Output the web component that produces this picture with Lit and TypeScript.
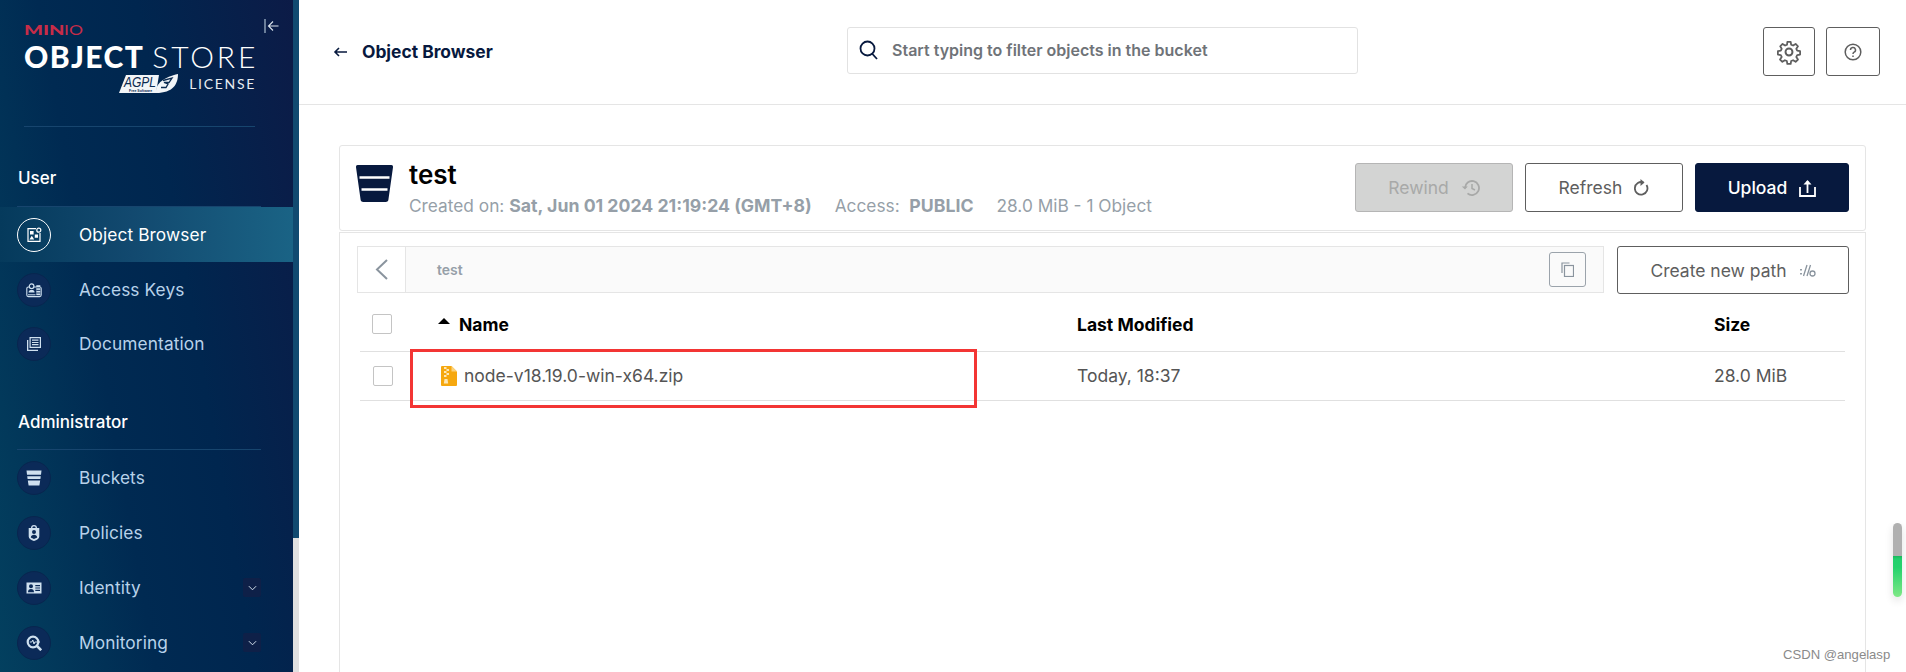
import { LitElement, html, css, svg } from "lit";
import { customElement } from "lit/decorators.js";

const icons: Record<string, unknown> = {
  object: svg`<svg viewBox="0 0 16 16" width="16" height="16"><path fill="none" stroke="currentColor" stroke-width="1.200" d="M10 1.600H2v12.800h12V6"/><circle cx="12.800" cy="3.200" r="2" fill="none" stroke="currentColor" stroke-width="1.200"/><path fill="currentColor" d="M4 4h3.600v3.600H4zM8.800 7.600h3.200v3.200H8.800zM5.800 8.800l2.400 3.800H3.400z"/></svg>`,
  keys: svg`<svg viewBox="0 0 16 16" width="16" height="16"><rect x=".8" y="5" width="14.400" height="9.600" rx="1.600" fill="none" stroke="currentColor" stroke-width="1.100"/><circle cx="5.600" cy="4.200" r="2.300" fill="#0b2a58" stroke="currentColor" stroke-width="1.200"/><path d="M2.600 10.500c0-1.700 1.300-2.700 3-2.700s3 1 3 2.700z" fill="currentColor"/><path d="M2 12.300h7.500v1H2z" fill="currentColor"/><path d="M10.300 3.200h4v10h-4z" fill="currentColor"/><path d="M10.300 5.800h4M10.300 8.400h4M10.300 11h4" stroke="#0b2a58" stroke-width=".9"/></svg>`,
  docs: svg`<svg viewBox="0 0 16 16" width="16" height="16" fill="currentColor"><path fill-rule="evenodd" d="M3.500 1H15v11H3.500zM4.700 2.200v8.600h9.100V2.200zM6 3.600h6.500v1.100H6zM6 5.900h6.500V7H6zM6 8.100h6.500v1.100H6z"/><path d="M1 4h1.300v9.700H12V15H1z"/></svg>`,
  bucket: svg`<svg viewBox="0 0 16 16" width="16" height="16" fill="currentColor"><path d="M.5 .5h15l-.5 4.300H1zM1.200 6.300h13.600l-.4 2.800H1.600zM1.800 10.500h12.400l-.8 5H2.600z"/></svg>`,
  policy: svg`<svg viewBox="0 0 16 16" width="16" height="16" fill="currentColor"><path fill-rule="evenodd" d="M8 0a3 3 0 0 1 3 3h2.300v8.500c0 2-2.500 3.500-5.300 4.500-2.800-1-5.300-2.500-5.300-4.500V3H5a3 3 0 0 1 3-3zM8 1.300A1.700 1.700 0 0 0 6.300 3h3.400A1.700 1.700 0 0 0 8 1.300zM8 5a2 2 0 1 0 0 4 2 2 0 0 0 0-4zM4.800 12.400 8 14l3.200-1.600C11 10.500 9.700 9.700 8 9.700s-3 .8-3.200 2.700z"/></svg>`,
  identity: svg`<svg viewBox="0 0 16 16" width="16" height="16" fill="currentColor"><path fill-rule="evenodd" d="M.5 2.500h15v11H.5zM5 4.300a2 2 0 1 0 0 4 2 2 0 0 0 0-4zM2 12.200h6c0-1.900-1.200-3.100-3-3.100s-3 1.200-3 3.100zM9.300 5v1.200h4.700V5zM9.300 7.400v1.200h4.700V7.400zM9.300 9.800V11h4.700V9.800z"/></svg>`,
  monitor: svg`<svg viewBox="0 0 16 16" width="16" height="16"><circle cx="7" cy="7" r="5.300" fill="none" stroke="currentColor" stroke-width="2.200"/><path d="M11 11l4.200 4.200" stroke="currentColor" stroke-width="2.600"/><path d="M3.800 7h2l1-2 1.200 4 .8-2h5.200" fill="none" stroke="currentColor" stroke-width="1"/></svg>`,
};

const chevron = svg`<svg viewBox="0 0 10 6" width="9" height="6"><path d="M1 1l4 4 4-4" fill="none" stroke="#d5e2ee" stroke-width="1.100"/></svg>`;

const nav1 = [
  { label: "Object Browser", icon: "object", active: true },
  { label: "Access Keys", icon: "keys" },
  { label: "Documentation", icon: "docs" },
];
const nav2 = [
  { label: "Buckets", icon: "bucket" },
  { label: "Policies", icon: "policy" },
  { label: "Identity", icon: "identity", more: true },
  { label: "Monitoring", icon: "monitor", more: true },
];

@customElement("app-root")
export class AppRoot extends LitElement {
  static styles = css`
    :host { display: block; width: 1906px; height: 672px; overflow: hidden; position: relative; font-family: Inter, "Liberation Sans", sans-serif; background: #fff; }
    * { box-sizing: border-box; }
    .page { display: flex; height: 672px; }
    .side { width: 293px; flex: none; height: 672px; background: linear-gradient(80deg, #03405f 0%, #002a52 38%, #00264f 62%, #0c1b47 100%); color: #fff; position: relative; overflow: hidden; }
    .sbar { width: 6px; flex: none; background: linear-gradient(#114a70 0 538px, #e0e0e0 538px); }
    .collapse { position: absolute; left: 264px; top: 18px; }
    .logo { height: 127px; margin: 0 38px 0 24px; padding-top: 24px; border-bottom: 1px solid #17456e; }
    .minio { font: 400 12.500px/13px Lato, sans-serif; color: #c72c48; display: flex; }
    .minio b { font-weight: 900; transform: scaleX(1.6); transform-origin: left; display: block; width: 40px; }
    .minio span { transform: scaleX(1.4); transform-origin: left; display: block; }
    .objstore { font: 900 30px/30px Lato, sans-serif; margin-top: 4px; white-space: nowrap; letter-spacing: 1.400px; display: flex; gap: 8px; }
    .objstore span { font-weight: 300; letter-spacing: 2.900px; }
    .lic { display: flex; justify-content: flex-end; align-items: center; gap: 11px; margin-top: 3px; }
    .lic span { font: 400 14px/16px Lato, sans-serif; letter-spacing: 1.700px; color: #e8edf2; margin-right: -1px; }
    .group { font-size: 17px; line-height: 20px; font-weight: 500; padding-left: 18px; }
    .g1 { margin-top: 41px; height: 38px; }
    .g2 { margin-top: 41px; height: 37px; }
    .rule { height: 1px; background: #17456e; margin: 0 32px 0 17px; }
    .item { display: flex; align-items: center; height: 55px; padding-left: 17px; color: #b8d2ea; font-size: 17.300px; letter-spacing: .1px; }
    .item.active { color: #fff; background: linear-gradient(90deg, #053a5c 0%, #12496f 45%, #1a6385 100%); }
    .ic { width: 34px; height: 34px; border-radius: 50%; background: #0b2a58; border: 1px solid #08264f; display: flex; align-items: center; justify-content: center; margin-right: 28px; color: #cfe0ef; flex: none; }
    .active .ic { background: transparent; border-color: #fff; color: #fff; }
    .more { margin-left: auto; margin-right: 32px; width: 18px; height: 19px; border-radius: 2px; background: #0e2048; display: flex; align-items: center; justify-content: center; }
    .g1list .item:nth-child(3) { margin-top: -1px; }

    .main { flex: 1; min-width: 0; display: flex; flex-direction: column; }
    .top { height: 105px; flex: none; border-bottom: 1px solid #e5e5e5; display: flex; align-items: flex-start; padding: 27px 26px 0 34px; }
    .crumb { display: flex; align-items: center; height: 49px; width: 514px; font-size: 17.400px; font-weight: 700; color: #07193e; gap: 15px; }
    .search { width: 511px; height: 47px; border: 1px solid #e2e2e2; border-radius: 3px; display: flex; align-items: center; padding: 0 0 2px 11px; gap: 14px; font-size: 16px; font-weight: 600; color: #6f7378; }
    .sq { height: 49px; border: 1px solid #5e5e5e; border-radius: 3px; display: flex; align-items: center; justify-content: center; margin-left: 11px; color: #5e5e5e; background: #fff; }
    .sq.a { width: 52px; margin-left: auto; }
    .sq.b { width: 54px; }

    .content { flex: 1; padding: 40px 40px 0; display: flex; flex-direction: column; min-height: 0; }
    .card { height: 86px; flex: none; border: 1px solid #e5e5e5; border-radius: 3px; display: flex; padding: 17px 16px 0 16px; }
    .bkt { margin: 2px 16px 0 0; flex: none; }
    .title { font-size: 26px; font-weight: 600; line-height: 24px; color: #000; }
    .meta { font-size: 17.300px; line-height: 20px; color: #969fa8; margin-top: 9px; white-space: nowrap; display: flex; }
    .meta b { font-weight: 700; font-size: 17.700px; }
    .meta .s { margin-left: 23px; }
    .acts { margin-left: auto; display: flex; gap: 12px; }
    .btn { height: 49px; border: 1px solid #5e5e5e; border-radius: 3px; display: flex; align-items: center; justify-content: center; gap: 12px; font-size: 17.500px; color: #5e5e5e; background: #fff; }
    .btn.rw { width: 158px; background: #d3d4d3; border-color: #b5b5b5; color: #a8a9a8; }
    .btn.rf { width: 158px; }
    .btn.up { width: 154px; background: #07193e; border-color: #07193e; color: #fff; font-weight: 500; }

    .panel { flex: 1; margin-top: 1px; border: 1px solid #e5e5e5; border-bottom: 0; padding: 13px 16px 0 17px; }
    .pathrow { display: flex; gap: 13px; height: 48px; }
    .path { width: 1247px; height: 47px; border: 1px solid #e5e5e5; display: flex; align-items: center; background: #fafafa; }
    .back { width: 48px; height: 45px; background: #fff; border-right: 1px solid #e5e5e5; display: flex; align-items: center; justify-content: center; flex: none; }
    .pname { font-size: 14px; font-weight: 600; color: #969fa8; margin-left: 31px; }
    .copy { margin-left: auto; margin-right: 17px; width: 37px; height: 35px; border: 1px solid #9ba3ab; border-radius: 3px; display: flex; align-items: center; justify-content: center; background: #fafafa; }
    .newp { width: 232px; height: 48px; }
    .row { display: flex; align-items: center; margin: 0 4px 0 3px; padding-left: 12px; border-bottom: 1px solid #e0e0e0; }
    .row.h { height: 58px; font-size: 17.500px; font-weight: 700; color: #000; padding-top: 3px; }
    .row.d { height: 49px; font-size: 17.500px; color: #555; padding-bottom: 1px; }
    .cb { width: 20px; height: 20px; border: 1px solid #c4c4c4; border-radius: 2px; background: #fff; flex: none; }
    .c1 { width: 639px; margin-left: 46px; display: flex; align-items: center; flex: none; }
    .d .cb { margin-left: 1px; }
    .d .c1 { margin-left: 48px; width: 636px; }
    .c2 { width: 637px; flex: none; }
    .caret { width: 0; height: 0; border: 6.500px solid transparent; border-top: 0; border-bottom: 6px solid #000; margin: -7px 9px 0 0; }
    .zip { margin-right: 7px; flex: none; }

    .redbox { position: absolute; left: 410px; top: 349px; width: 567px; height: 59px; border: 3px solid #f33534; }
    .wm { position: absolute; left: 1783px; top: 647px; font: 13.100px/16px "Liberation Sans", sans-serif; color: #8a8a8a; white-space: nowrap; }
    .widget { position: absolute; left: 1893px; top: 523px; width: 9px; height: 74px; border-radius: 5px; overflow: hidden; background: linear-gradient(#b0b0b0 0 33px, #17b85c 33px, #22cf6c 36px, #24d26c 60%, #7fe886 100%); box-shadow: 0 4px 8px rgba(0,0,0,.12); }
  `;

  private item(n: { label: string; icon: string; active?: boolean; more?: boolean }) {
    return html`<div class="item ${n.active ? "active" : ""}">
      <div class="ic">${icons[n.icon]}</div>
      <span>${n.label}</span>
      ${n.more ? html`<div class="more">${chevron}</div>` : ""}
    </div>`;
  }

  render() {
    return html`
      <div class="page">
        <aside class="side">
          <svg class="collapse" width="15" height="16" viewBox="0 0 15 16" fill="none"><path d="M1 1v14" stroke="#9fb2c6" stroke-width="1.300"/><path d="M14.500 8H4.500M9 3.500 4.500 8 9 12.500" stroke="#dbe4ec" stroke-width="1.100"/></svg>
          <div class="logo">
            <div class="minio"><b>MIN</b><span>IO</span></div>
            <div class="objstore">OBJECT<span>STORE</span></div>
            <div class="lic">
              <svg width="59" height="20" viewBox="0 0 59 20">
                <path d="M7 1H40L37 19H0z" fill="#f2f5f8"/>
                <text x="5" y="13" font-family="Liberation Sans" font-style="italic" font-size="14" fill="#0a2a50" textLength="32" lengthAdjust="spacingAndGlyphs">AGPL</text>
                <text x="10" y="18" font-family="Liberation Sans" font-weight="700" font-size="3.500" fill="#0a2a50">Free Software</text>
                <path d="M37 19C36 9 46 3 59 0c0 10-5 19-22 19z" fill="#f2f5f8"/>
                <path d="M44 6.500 53 4l-3 4.500h-5l4 1.500-2 3.500h-5" fill="none" stroke="#0a2a50" stroke-width="1.300"/>
              </svg>
              <span>LICENSE</span>
            </div>
          </div>
          <div class="group g1">User</div>
          <div class="rule"></div>
          <div class="g1list">${nav1.map((n) => this.item(n))}</div>
          <div class="group g2">Administrator</div>
          <div class="rule"></div>
          <div class="g2list">${nav2.map((n) => this.item(n))}</div>
        </aside>
        <div class="sbar"></div>
        <main class="main">
          <header class="top">
            <div class="crumb">
              <svg width="14" height="10" viewBox="0 0 14 10"><path d="M14 5H3M6 1 2 5l4 4" fill="none" stroke="#07193e" stroke-width="1.600"/></svg>
              <span>Object Browser</span>
            </div>
            <div class="search">
              <svg width="19" height="20" viewBox="0 0 19 20" fill="none" stroke="#07193e" stroke-width="1.800"><circle cx="8.500" cy="8.500" r="7"/><path d="M13 13.500l5 5.500"/></svg>
              <span>Start typing to filter objects in the bucket</span>
            </div>
            <div class="sq a">
              <svg width="26" height="26" viewBox="0 0 24 24" fill="none" stroke="currentColor" stroke-width="1.800" stroke-linejoin="round"><circle cx="12" cy="12" r="3.200"/><path d="M10.300 1.500h3.400l.5 3 2 .9 2.600-1.700 2.400 2.400-1.700 2.600.9 2 3 .5v3.400l-3 .5-.9 2 1.700 2.600-2.400 2.400-2.600-1.700-2 .9-.5 3h-3.400l-.5-3-2-.9-2.600 1.700-2.400-2.400 1.700-2.600-.9-2-3-.5v-3.400l3-.5.9-2L3 6.100l2.400-2.400L8 5.400l2-.9z" transform="translate(1.200 1.200) scale(.9)"/></svg>
            </div>
            <div class="sq b">
              <svg width="18" height="18" viewBox="0 0 18 18" fill="none" stroke="currentColor" stroke-width="1.500"><circle cx="9" cy="9" r="7.800"/><path d="M6.500 7a2.500 2.500 0 1 1 3.600 2.200c-.8.400-1.100.9-1.100 1.800"/><path d="M9 12.500v1.600"/></svg>
            </div>
          </header>
          <section class="content">
            <div class="card">
              <svg class="bkt" width="37" height="37" viewBox="0 0 37 37"><path d="M2 0h33a2 2 0 0 1 2 2.200L32.500 34a3 3 0 0 1-3 3h-22a3 3 0 0 1-3-3L0 2.200A2 2 0 0 1 2 0z" fill="#07193e"/><path d="M3.500 12.500h30M5.500 24.500h26" stroke="#fff" stroke-width="2.400"/></svg>
              <div>
                <div class="title">test</div>
                <div class="meta">
                  <span>Created on:&nbsp;<b>Sat, Jun 01 2024 21:19:24 (GMT+8)</b></span>
                  <span class="s">Access:&nbsp;&nbsp;<b>PUBLIC</b></span>
                  <span class="s">28.0 MiB - 1 Object</span>
                </div>
              </div>
              <div class="acts">
                <div class="btn rw">Rewind
                  <svg width="19" height="18" viewBox="0 0 19 18" fill="none" stroke="currentColor" stroke-width="1.800"><path d="M4 9a7 7 0 1 1 2.500 5.400"/><path d="M0.800 7.500h6L4 10.500z" fill="currentColor" stroke="none"/><path d="M11 5v4.500l3 1.500" stroke-width="1.500"/></svg>
                </div>
                <div class="btn rf">Refresh
                  <svg width="15" height="19" viewBox="0 0 15 19" fill="none" stroke="currentColor" stroke-width="1.800"><path d="M9.500 4.500a6.300 6.300 0 1 0 3 2.500"/><path d="M6.500 1 10.500 4.500 6.500 8" fill="currentColor" stroke="none"/></svg>
                </div>
                <div class="btn up">Upload
                  <svg width="17" height="18" viewBox="0 0 17 18" fill="none" stroke="#fff" stroke-width="1.800"><path d="M1 8v9h15V8M8.500 14V2"/><path d="M4.500 5.500 8.500 1l4 4.500" fill="#fff" stroke="none"/></svg>
                </div>
              </div>
            </div>
            <div class="panel">
              <div class="pathrow">
                <div class="path">
                  <div class="back"><svg width="13" height="21" viewBox="0 0 13 21" fill="none" stroke="#8a949e" stroke-width="2"><path d="M12 1 2 10.500 12 20"/></svg></div>
                  <span class="pname">test</span>
                  <div class="copy"><svg width="13" height="15" viewBox="0 0 13 15" fill="none" stroke="#8a949e" stroke-width="1.200"><path d="M8.500 1H1v10"/><rect x="3.500" y="3.500" width="9" height="11"/></svg></div>
                </div>
                <div class="btn newp">Create new path
                  <svg width="17" height="13" viewBox="0 0 17 13" fill="none" stroke="#8a949e" stroke-width="1.300"><path d="M2 5v1.500M2 9v1.500" stroke-width="1.800"/><path d="M4.500 12 8 1M8 12l3.500-11"/><circle cx="13.500" cy="9.500" r="2.500"/></svg>
                </div>
              </div>
              <div class="row h">
                <div class="cb"></div>
                <div class="c1"><i class="caret"></i>Name</div>
                <div class="c2">Last Modified</div>
                <div>Size</div>
              </div>
              <div class="row d">
                <div class="cb"></div>
                <div class="c1">
                  <svg class="zip" width="16" height="20" viewBox="0 0 16 20"><path d="M1 0h9.500L16 5.500V19a1 1 0 0 1-1 1H1a1 1 0 0 1-1-1V1a1 1 0 0 1 1-1z" fill="#f6a80f"/><path d="M10.500 0 16 5.500h-5.500z" fill="#fbd27e"/><path d="M3 1h2.500v2H3zM5.500 3H8v2H5.500zM3 5h2.500v2H3zM5.500 7H8v2H5.500zM3 9h2.500v2H3z" fill="#fde7b8"/><path d="M3.500 13h3l.7 4.500H2.800z" fill="#fde7b8"/></svg>
                  node-v18.19.0-win-x64.zip
                </div>
                <div class="c2">Today, 18:37</div>
                <div>28.0 MiB</div>
              </div>
            </div>
          </section>
        </main>
      </div>
      <div class="redbox"></div>
      <div class="widget"></div>
      <div class="wm">CSDN @angelasp</div>
    `;
  }
}
